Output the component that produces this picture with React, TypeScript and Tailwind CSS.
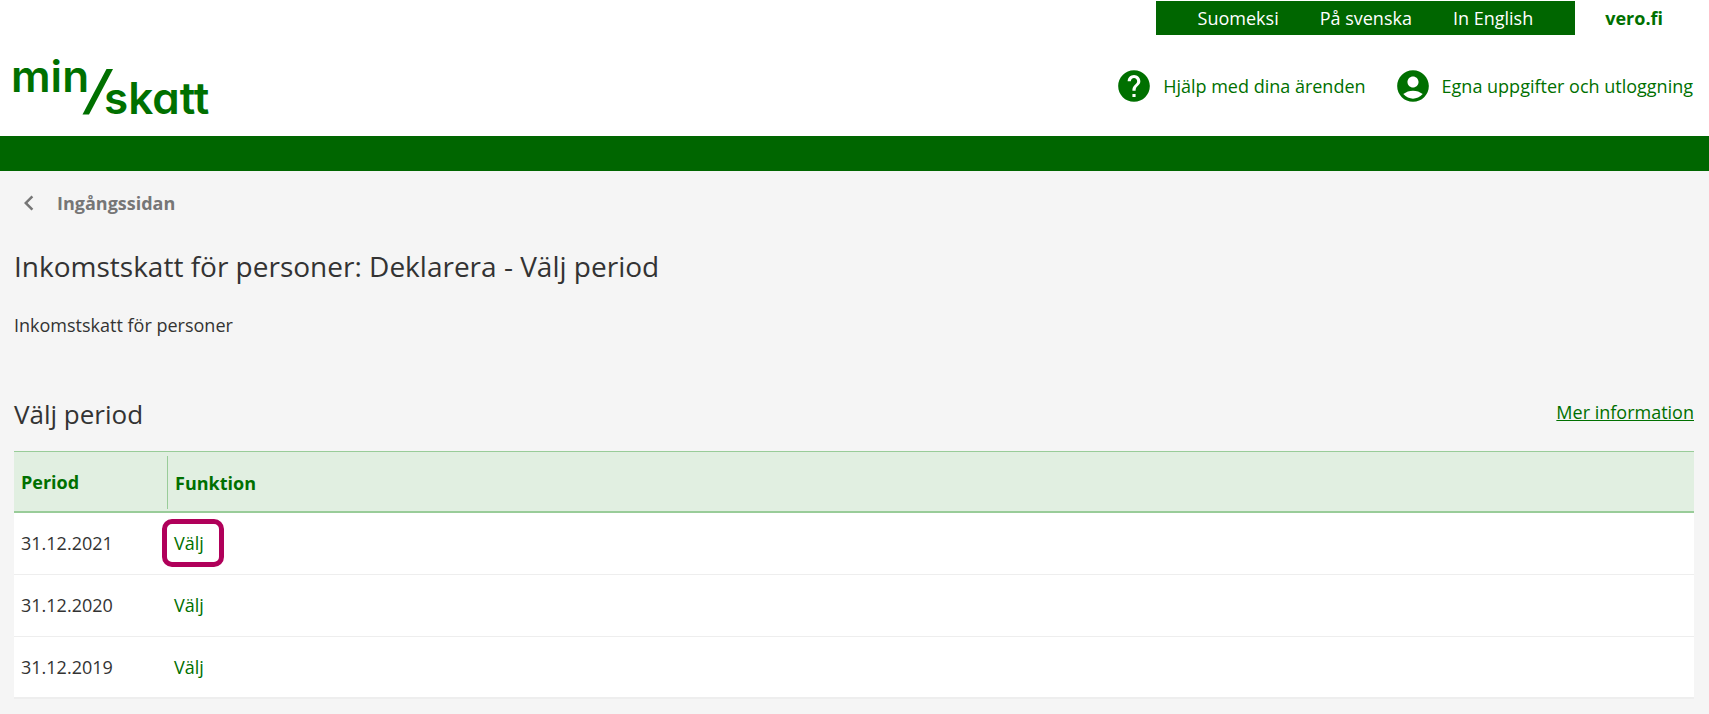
import { MdAccountCircle, MdChevronLeft, MdHelp } from "react-icons/md";

const languages = ["Suomeksi", "På svenska", "In English"];

const headerLinks = [
  { name: "Hjälp med dina ärenden", icon: MdHelp },
  { name: "Egna uppgifter och utloggning", icon: MdAccountCircle },
];

const periods = [
  { date: "31.12.2021", highlighted: true },
  { date: "31.12.2020", highlighted: false },
  { date: "31.12.2019", highlighted: false },
];

const Logo = () => (
  <svg
    className="h-[84px] w-[220px]"
    viewBox="0 0 220 84"
    fill="#007000"
    role="img"
    aria-label="min/skatt"
  >
    <g className="font-['Inter',sans-serif] text-[44px] font-semibold [font-feature-settings:'cv11']">
      <text x="0" y="47">min</text>
      <text x="93" y="69">skatt</text>
    </g>
    <path d="M95.5 24H102L78 69.5H71.5Z" />
  </svg>
);

const Header = () => {
  return (
    <header className="bg-white">
      <div className="flex items-center justify-end pt-px pr-[46px]">
        <nav className="flex h-[34px] items-center gap-[41px] bg-[#006600] px-[42px] text-white">
          {languages.map((language) => (
            <a key={language} href="#">
              {language}
            </a>
          ))}
        </nav>
        <a href="#" className="ml-[30px] font-bold text-[#007000]">
          vero.fi
        </a>
      </div>
      <div className="flex h-[101px] items-start justify-between pr-4 pl-[11px]">
        <a href="#" className="mt-[10px]">
          <Logo />
        </a>
        <div className="mt-8 flex gap-7 text-[#007000]">
          {headerLinks.map((link) => (
            <button key={link.name} className="flex items-center gap-2.5">
              <link.icon className="size-[38px]" aria-hidden="true" />
              {link.name}
            </button>
          ))}
        </div>
      </div>
      <div className="h-[35px] bg-[#006600]" />
    </header>
  );
};

const App = () => {
  return (
    <div className="min-h-screen bg-[#f5f5f5] font-['Open_Sans',sans-serif] text-[18px] leading-6 text-[#333333]">
      <Header />

      <main className="pr-[15px] pb-4 pl-[14px]">
        <a
          href="#"
          className="flex h-16 items-center gap-[13px] font-bold text-[#767676]"
        >
          <MdChevronLeft className="size-[30px]" aria-hidden="true" />
          Ingångssidan
        </a>

        <h1 className="mt-[11px] text-[28px] leading-10 font-medium">
          Inkomstskatt för personer: Deklarera - Välj period
        </h1>
        <p className="mt-[27px]">Inkomstskatt för personer</p>

        <div className="mt-14 flex items-center justify-between">
          <h2 className="text-[26px] leading-[42px] font-medium">
            Välj period
          </h2>
          <a href="#" className="mb-1 text-[#007000] underline">
            Mer information
          </a>
        </div>

        <table className="mt-4 w-full border-collapse bg-white text-left">
          <thead className="border-t border-b-2 border-[#99cc99] bg-[#e1efe1] text-[#007000]">
            <tr>
              <th className="w-[153px] px-[7px]">Period</th>
              <th className="pt-1 pb-0.5">
                <div className="flex h-[53px] items-center border-l border-[#99cc99] pl-[7px]">
                  Funktion
                </div>
              </th>
            </tr>
          </thead>
          <tbody className="border-b-2 border-[#eeeeee]">
            {periods.map((period) => (
              <tr
                key={period.date}
                className="h-[62px] border-b border-[#eeeeee]"
              >
                <td className="px-[7px]">{period.date}</td>
                <td className="px-[7px]">
                  <a href="#" className="relative text-[#007000]">
                    {period.highlighted && (
                      <span className="absolute -inset-y-3 -right-5 -left-3 rounded-[10px] border-5 border-[#b0005a]" />
                    )}
                    Välj
                  </a>
                </td>
              </tr>
            ))}
          </tbody>
        </table>
      </main>
    </div>
  );
};

export default App;
